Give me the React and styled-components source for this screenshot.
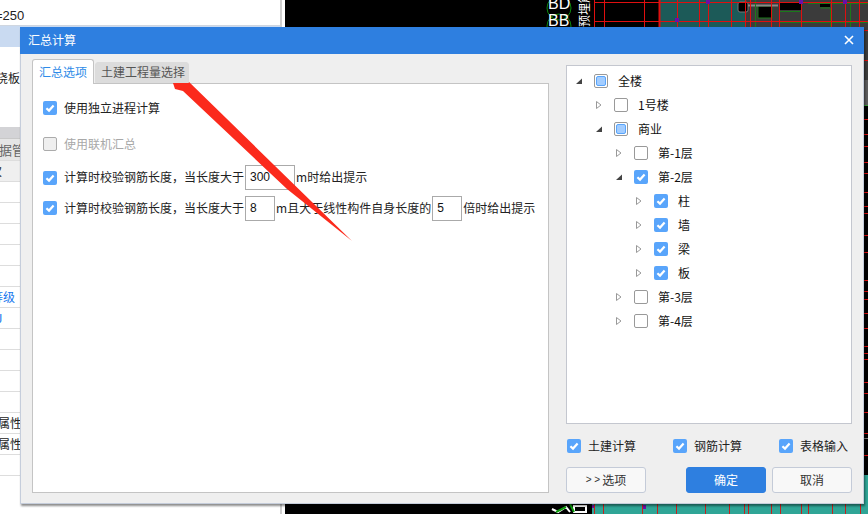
import styled, { createGlobalStyle } from "styled-components";

const GlobalStyle = createGlobalStyle`
  html, body {
    margin: 0;
    padding: 0;
    background: #000;
  }
  * {
    box-sizing: border-box;
  }
`;

const FONT = `"Noto Sans CJK SC", "Liberation Sans", sans-serif`;

// left project pane ------------------------------------------------------------ //

const LEFT_ROWS = [
  { text: "" }, { text: "" }, { text: "" }, { text: "" }, { text: "" },
  { text: "等级", link: true, indent: -9 },
  { text: "J", link: true, indent: -4 },
  { text: "" }, { text: "" }, { text: "" }, { text: "" },
  { text: "构件属性", indent: -26 },
  { text: "构件属性", indent: -26 },
  { text: "" },
];

const TREE = [
  { level: 0, open: true, state: "partial", label: "全楼" },
  { level: 1, open: false, state: "off", label: "1号楼" },
  { level: 1, open: true, state: "partial", label: "商业" },
  { level: 2, open: false, state: "off", label: "第-1层" },
  { level: 2, open: true, state: "on", label: "第-2层" },
  { level: 3, open: false, state: "on", label: "柱" },
  { level: 3, open: false, state: "on", label: "墙" },
  { level: 3, open: false, state: "on", label: "梁" },
  { level: 3, open: false, state: "on", label: "板" },
  { level: 2, open: false, state: "off", label: "第-3层" },
  { level: 2, open: false, state: "off", label: "第-4层" },
];

const RED_X = [594, 604, 644, 659, 677, 699, 708, 731, 745, 750, 771, 779, 801, 831, 845, 859];
const BOTTOM_RED_X = [594, 603, 642, 657, 676, 705, 729, 744, 748, 771, 780, 801, 808, 832, 845, 860];
const TICKS_Y = [119, 134, 146, 162, 173, 192, 206, 213, 235, 252, 280, 291, 299, 313, 328, 346, 353, 359, 382, 393, 412, 433, 455];

const Check = ({ state = "on" }) => (
  <CheckBox $state={state}>
    {state === "on" && (
      <svg width="14" height="14" viewBox="0 0 14 14">
        <path d="M3.4 7.2 L6 9.6 L10.6 4.6" fill="none" stroke="#fff" strokeWidth="2.2" />
      </svg>
    )}
    {state === "partial" && <CheckInner />}
  </CheckBox>
);

const Expander = ({ open }) => (
  <svg width="18" height="14" viewBox="0 0 18 14">
    {open ? (
      <path d="M0 10 L6 10 L6 4.5 Z" fill="#444" />
    ) : (
      <path d="M0.5 3.5 L5 7 L0.5 10.5 Z" fill="#fff" stroke="#999" strokeWidth="1" />
    )}
  </svg>
);

const CadDrawing = () => (
  <svg width="583" height="514" viewBox="285 0 583 514" style={{ display: "block" }}>
    <rect x="285" y="0" width="583" height="514" fill="#000" />
    <rect x="660" y="0" width="85" height="27" fill="#1c5a58" />
    <rect x="745" y="0" width="123" height="27" fill="#3b3b3b" />
    <rect x="864" y="27" width="4" height="78" fill="#3b3b3b" />
    <rect x="864" y="80" width="4" height="25" fill="#5c5c5c" />
    <rect x="864" y="475" width="4" height="39" fill="#2fa596" />
    <rect x="592" y="504" width="276" height="10" fill="#2fa596" />
    <rect x="285" y="504" width="306" height="10" fill="#000" />
    <rect x="738" y="2" width="10" height="10" rx="2" fill="#000" stroke="#777" />
    <rect x="758" y="6" width="14" height="12" fill="#000" stroke="#1a7a1a" />
    <rect x="779" y="3" width="22" height="7" fill="#000" />
    <rect x="820" y="4" width="10" height="3" fill="#000" />
    <path d="M748 5.5 H778" stroke="#888" strokeWidth="2" />
    <path d="M755.5 0 V27 M780 11.5 H800 M780 22.5 H868 M808 3.5 H868 M820.5 8 H830.5 V27 M850.5 3 V27" stroke="#1a7a1a" fill="none" />
    {RED_X.map((x) => (
      <path key={x} d={`M${x + 0.5} 0 V27`} stroke="#e00f0f" strokeWidth={x === 659 ? 2 : 1} />
    ))}
    <path d="M594 2.5 H868 M594 21.5 H868" stroke="#e00f0f" />
    <g fill="#6a0fa8">
      <rect x="706" y="0" width="4" height="4" />
      <rect x="799" y="0" width="4" height="4" />
      <rect x="843" y="0" width="4" height="4" />
      <rect x="675" y="18" width="4" height="4" />
      <rect x="592" y="505" width="3" height="3" />
      <rect x="642" y="505" width="4" height="4" />
    </g>
    {TICKS_Y.map((y) => (
      <path key={y} d={`M864 ${y + 0.5} H868`} stroke="#e00f0f" />
    ))}
    <path d="M864 438.5 H868" stroke="#777" />
    <path d="M864 105.5 H868" stroke="#3a9a3a" />
    <path d="M864 30.5 H868 M864 60.5 H868" stroke="#e00f0f" />
    {BOTTOM_RED_X.map((x) => (
      <path key={x} d={`M${x + 0.5} 504 V514`} stroke="#c8201c" />
    ))}
    <circle cx="559" cy="8" r="12" fill="none" stroke="#0c8a0c" />
    <circle cx="559" cy="26" r="12" fill="none" stroke="#0c8a0c" />
    <text x="548" y="9" fill="#fff" fontSize="16" fontFamily="Liberation Sans">BD</text>
    <text x="548" y="26" fill="#fff" fontSize="16" fontFamily="Liberation Sans">BB</text>
    <text x="0" y="0" fill="#fff" fontSize="12" fontFamily="Noto Sans CJK SC" transform="translate(589 27) rotate(-90)">预埋筋板</text>
    <path d="M552 509 l6 3 l8 -5 l4 5 M574 506 h12 v6 h-12 z" stroke="#fff" strokeWidth="2" fill="none" />
    <path d="M556 512 l10 -5 M570 504 l4 8" stroke="#0c9a0c" strokeWidth="2" fill="none" />
  </svg>
);

const App = () => {
  return (
    <Desktop>
      <GlobalStyle />
      <LeftPane>
        <PaneTop>=250</PaneTop>
        <PaneSelected />
        <PaneNote>现浇板</PaneNote>
        <PaneHeadStrip />
        <PaneHead>数据管理</PaneHead>
        <PaneSubHead>次</PaneSubHead>
        {LEFT_ROWS.map((row, i) => (
          <PaneRow key={i} $link={row.link} $indent={row.indent || 0}>{row.text}</PaneRow>
        ))}
      </LeftPane>
      <PaneGutter />
      <Canvas>
        <CadDrawing />
      </Canvas>

      <Dialog>
        <TitleBar>
          <span>汇总计算</span>
          <svg width="10" height="10" viewBox="0 0 10 10">
            <path d="M1 1 L9 9 M9 1 L1 9" stroke="#fff" strokeWidth="1.6" />
          </svg>
        </TitleBar>
        <DialogBody>
          <LeftColumn>
            <Tabs>
              <Tab $active>汇总选项</Tab>
              <Tab>土建工程量选择</Tab>
            </Tabs>
            <TabPanel>
              <OptionRow $height={36}>
                <Check />
                <OptionText>使用独立进程计算</OptionText>
              </OptionRow>
              <OptionRow $height={36}>
                <Check state="disabled" />
                <OptionText $muted>使用联机汇总</OptionText>
              </OptionRow>
              <OptionRow $height={31}>
                <Check />
                <OptionText>计算时校验钢筋长度，当长度大于</OptionText>
                <NumberBox $width={50}>300</NumberBox>
                <OptionText>m时给出提示</OptionText>
              </OptionRow>
              <OptionRow $height={30}>
                <Check />
                <OptionText>计算时校验钢筋长度，当长度大于</OptionText>
                <NumberBox $width={30}>8</NumberBox>
                <OptionText>m且大于线性构件自身长度的</OptionText>
                <NumberBox $width={30}>5</NumberBox>
                <OptionText>倍时给出提示</OptionText>
              </OptionRow>
            </TabPanel>
          </LeftColumn>

          <RightColumn>
            <TreeBox>
              {TREE.map((node) => (
                <TreeRow key={node.label} $level={node.level}>
                  <Expander open={node.open} />
                  <Check state={node.state} />
                  <TreeLabel>{node.label}</TreeLabel>
                </TreeRow>
              ))}
            </TreeBox>
            <ChecksRow>
              <CheckItem><Check /><span>土建计算</span></CheckItem>
              <CheckItem><Check /><span>钢筋计算</span></CheckItem>
              <CheckItem><Check /><span>表格输入</span></CheckItem>
            </ChecksRow>
            <ButtonRow>
              <Button><Chevrons>{"> >"}</Chevrons>选项</Button>
              <ButtonGroup>
                <Button $primary>确定</Button>
                <Button>取消</Button>
              </ButtonGroup>
            </ButtonRow>
          </RightColumn>
        </DialogBody>
      </Dialog>

      <Arrow width="868" height="514" viewBox="0 0 868 514">
        <path d="M170 74 L189 77 L187 80 L352 241 L287 189 L183 91 L175 89 Z" fill="#fb2a1c" />
      </Arrow>
    </Desktop>
  );
};

const Desktop = styled.div`
  position: relative;
  display: flex;
  width: 868px;
  height: 514px;
  overflow: hidden;
  background: #000;
  font-family: ${FONT};
`;

const LeftPane = styled.div`
  width: 280px;
  height: 514px;
  background: #fff;
  font-size: 12px;
  color: #222;
  overflow: hidden;
`;

const PaneTop = styled.div`
  height: 26px;
  padding-top: 5px;
  font-family: "Liberation Sans", sans-serif;
  font-size: 13px;
  line-height: 21px;
  border-bottom: 1px solid #cfd6e0;
  text-indent: -5px;
`;

const PaneSelected = styled.div`
  height: 21px;
  background: #c9daf1;
`;

const PaneNote = styled.div`
  height: 80px;
  padding-top: 22px;
  line-height: 18px;
  text-indent: -16px;
`;

const PaneHeadStrip = styled.div`
  height: 11px;
  background: #d3d3d6;
`;

const PaneHead = styled.div`
  height: 22px;
  background: #e6e6e6;
  color: #666;
  font-size: 13px;
  line-height: 22px;
  text-indent: -14px;
  border-top: 1px solid #c8c8c8;
`;

const PaneSubHead = styled.div`
  height: 22px;
  background: #efefef;
  border-top: 1px solid #ddd;
  border-bottom: 1px solid #ddd;
  line-height: 20px;
  text-indent: -10px;
`;

const PaneRow = styled.div`
  height: 21px;
  line-height: 20px;
  border-bottom: 1px solid #ddd;
  color: ${(props) => (props.$link ? "#1677ee" : "#222")};
  text-indent: ${(props) => props.$indent}px;
`;

const PaneGutter = styled.div`
  width: 5px;
  background: #fff;
  border-left: 2px solid #cfcfcf;
`;

const Canvas = styled.div`
  flex: 1;
`;

const Dialog = styled.div`
  position: absolute;
  left: 20px;
  top: 27px;
  width: 844px;
  height: 477px;
  display: flex;
  flex-direction: column;
  background: #efefef;
  border: 1px solid #c5cddb;
  border-top: none;
  box-shadow: 1px 2px 2px rgba(0, 0, 0, 0.45);
`;

const TitleBar = styled.div`
  height: 27px;
  flex-shrink: 0;
  margin: 0 -1px;
  padding: 0 10px 2px 8px;
  display: flex;
  align-items: center;
  justify-content: space-between;
  background: #2e7fe0;
  color: #fff;
  font-size: 12px;
`;

const DialogBody = styled.div`
  flex: 1;
  display: flex;
  justify-content: space-between;
  padding: 5px 11px 11px 11px;
`;

const LeftColumn = styled.div`
  width: 517px;
  display: flex;
  flex-direction: column;
`;

const Tabs = styled.div`
  display: flex;
  align-items: flex-end;
  gap: 1px;
  height: 25px;
  margin-bottom: -1px;
  z-index: 1;
`;

const Tab = styled.div`
  height: ${(props) => (props.$active ? "25px" : "21px")};
  margin-bottom: ${(props) => (props.$active ? "0" : "1px")};
  padding: ${(props) => (props.$active ? "0 6px 2px 6px" : "0 3px 2px 5px")};
  display: flex;
  align-items: center;
  font-size: 12px;
  border-radius: 3px 3px 0 0;
  color: ${(props) => (props.$active ? "#2e8be8" : "#555")};
  background: ${(props) => (props.$active ? "#fff" : "#dcdcdc")};
  border: 1px solid ${(props) => (props.$active ? "#c4c4c4" : "#dcdcdc")};
  border-bottom: ${(props) => (props.$active ? "none" : "1px solid #dcdcdc")};
`;

const TabPanel = styled.div`
  flex: 1;
  padding: 6px 0 0 10px;
  background: #fff;
  border: 1px solid #c4c4c4;
`;

const OptionRow = styled.div`
  height: ${(props) => props.$height}px;
  display: flex;
  align-items: center;
`;

const OptionText = styled.span`
  padding-bottom: 2px;
  font-size: 12px;
  white-space: nowrap;
  color: ${(props) => (props.$muted ? "#a8a8a8" : "#222")};
`;

const NumberBox = styled.div`
  width: ${(props) => props.$width}px;
  height: 25px;
  margin: 0 1px;
  padding-left: 4px;
  flex-shrink: 0;
  font-family: "Liberation Sans", sans-serif;
  font-size: 12px;
  line-height: 23px;
  color: #111;
  background: #fff;
  border: 1px solid #aaa;
`;

const CheckBox = styled.div`
  width: 14px;
  height: 14px;
  flex-shrink: 0;
  display: flex;
  align-items: center;
  justify-content: center;
  border-radius: 2px;
  background: ${(props) => (props.$state === "on" ? "#59a5fb" : props.$state === "disabled" ? "#efefef" : "#fff")};
  border: ${(props) =>
    props.$state === "on" ? "none" : props.$state === "disabled" ? "1px solid #ababab" : "1px solid #999"};
  & + ${OptionText} {
    margin-left: 7px;
  }
  svg {
    display: block;
  }
`;

const CheckInner = styled.div`
  width: 10px;
  height: 10px;
  border-radius: 2px;
  background: #a3cdff;
  border: 1px solid #59a5fb;
`;

const RightColumn = styled.div`
  width: 286px;
  padding-top: 6px;
  display: flex;
  flex-direction: column;
`;

const TreeBox = styled.div`
  height: 359px;
  padding-top: 3px;
  background: #fff;
  border: 1px solid #c4c7cf;
`;

const TreeRow = styled.div`
  height: 24px;
  padding-left: ${(props) => 9 + props.$level * 20}px;
  display: flex;
  align-items: center;
`;

const TreeLabel = styled.span`
  margin-left: 10px;
  padding-bottom: 2px;
  font-size: 12px;
  color: #111;
`;

const ChecksRow = styled.div`
  height: 43px;
  padding: 0 4px 0 1px;
  display: flex;
  align-items: center;
  justify-content: space-between;
`;

const CheckItem = styled.div`
  display: flex;
  align-items: center;
  gap: 7px;
  font-size: 12px;
  color: #222;
`;

const ButtonRow = styled.div`
  display: flex;
  justify-content: space-between;
`;

const ButtonGroup = styled.div`
  display: flex;
  gap: 6px;
`;

const Button = styled.div`
  width: 80px;
  height: 26px;
  padding-bottom: 2px;
  display: flex;
  align-items: center;
  justify-content: center;
  font-size: 12px;
  border-radius: 3px;
  color: ${(props) => (props.$primary ? "#fff" : "#333")};
  background: ${(props) => (props.$primary ? "#2e7fe0" : "#f8f8f8")};
  border: 1px solid ${(props) => (props.$primary ? "#2e7fe0" : "#c4cbd8")};
`;

const Chevrons = styled.span`
  margin-right: 2px;
  font-family: "Liberation Sans", sans-serif;
  font-size: 10px;
  white-space: pre;
`;

const Arrow = styled.svg`
  position: absolute;
  left: 0;
  top: 0;
  pointer-events: none;
`;

export default App;
